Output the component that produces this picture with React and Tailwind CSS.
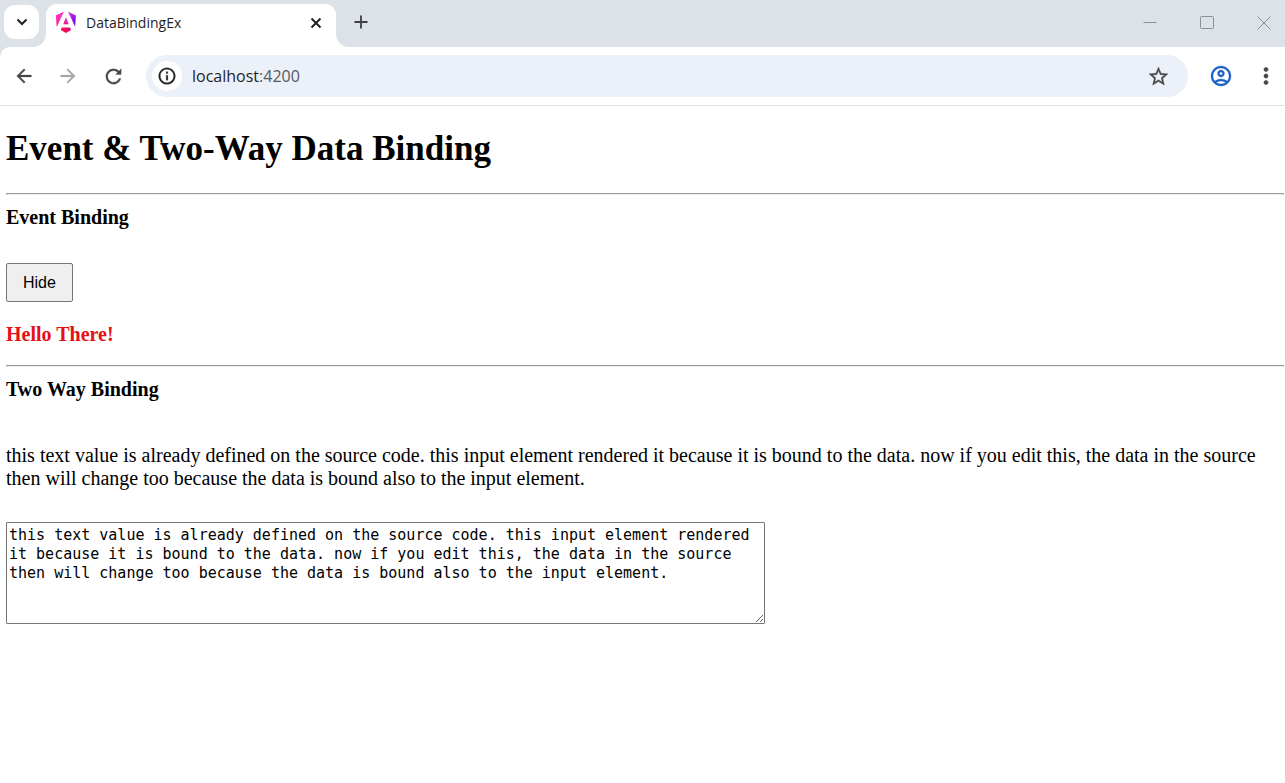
import { useState } from "react";

const INITIAL_TEXT =
  "this text value is already defined on the source code. this input element rendered it because it is bound to the data. now if you edit this, the data in the source then will change too because the data is bound also to the input element.";

function Glyph({ d, className }) {
  return (
    <svg
      viewBox="0 0 24 24"
      fill="currentColor"
      stroke="currentColor"
      strokeWidth=".3"
      aria-hidden="true"
      className={className}
    >
      <path d={d} />
    </svg>
  );
}

const ICONS = {
  back: "M20 11H7.83l5.59-5.59L12 4l-8 8 8 8 1.41-1.41L7.83 13H20v-2z",
  forward: "M12 4l-1.41 1.41L16.17 11H4v2h12.17l-5.58 5.59L12 20l8-8z",
  reload:
    "M17.65 6.35C16.2 4.9 14.21 4 12 4c-4.42 0-7.99 3.58-7.99 8s3.57 8 7.99 8c3.73 0 6.84-2.55 7.73-6h-2.08c-.82 2.33-3.04 4-5.65 4-3.31 0-6-2.69-6-6s2.69-6 6-6c1.66 0 3.14.69 4.22 1.78L14.2 9.8H20V4l-2.35 2.35z",
  info: "M11 7h2v2h-2zm0 4h2v6h-2zm1-9C6.48 2 2 6.48 2 12s4.48 10 10 10 10-4.48 10-10S17.52 2 12 2zm0 18c-4.41 0-8-3.59-8-8s3.59-8 8-8 8 3.59 8 8-3.59 8-8 8z",
  star: "M22 9.24l-7.19-.62L12 2 9.19 8.63 2 9.24l5.46 4.73L5.82 21 12 17.27 18.18 21l-1.63-7.03L22 9.24zM12 15.4l-3.76 2.27 1-4.28-3.32-2.88 4.38-.38L12 6.1l1.71 4.04 4.38.38-3.32 2.88 1 4.28L12 15.4z",
  account:
    "M5.85 17.1q1.275-.975 2.85-1.537T12 15t3.3.563 2.85 1.537q.875-1.025 1.363-2.325T20 12q0-3.325-2.337-5.663T12 4 6.337 6.338 4 12q0 1.475.488 2.775T5.85 17.1M12 13q-1.475 0-2.488-1.012T8.5 9.5t1.013-2.488T12 6t2.488 1.013T15.5 9.5t-1.012 2.488T12 13m0 9q-2.075 0-3.9-.788t-3.175-2.137-2.137-3.175T2 12t.788-3.9 2.137-3.175T8.1 2.788 12 2t3.9.788 3.175 2.137T21.213 8.1 22 12t-.788 3.9-2.137 3.175-3.175 2.138T12 22m0-2q1.325 0 2.5-.387t2.15-1.113q-.975-.725-2.15-1.112T12 17t-2.5.388T7.35 18.5q.975.725 2.15 1.113T12 20m0-9q.65 0 1.075-.425T13.5 9.5t-.425-1.075T12 8t-1.075.425T10.5 9.5t.425 1.075T12 11",
  more: "M12 8c1.1 0 2-.9 2-2s-.9-2-2-2-2 .9-2 2 .9 2 2 2zm0 2c-1.1 0-2 .9-2 2s.9 2 2 2 2-.9 2-2-.9-2-2-2zm0 6c-1.1 0-2 .9-2 2s.9 2 2 2 2-.9 2-2-.9-2-2-2z",
};

function AngularLogo() {
  return (
    <svg viewBox="0 0 223 236" aria-hidden="true" className="h-[21px] w-5">
      <defs>
        <linearGradient id="ng-a" x1="49" x2="225" y1="214" y2="130" gradientUnits="userSpaceOnUse">
          <stop stopColor="#E40035" />
          <stop offset=".24" stopColor="#F60A48" />
          <stop offset=".35" stopColor="#F20755" />
          <stop offset=".49" stopColor="#DC087D" />
          <stop offset=".75" stopColor="#9717E7" />
          <stop offset="1" stopColor="#6C00F5" />
        </linearGradient>
        <linearGradient id="ng-b" x1="22" x2="133" y1="28" y2="175" gradientUnits="userSpaceOnUse">
          <stop stopColor="#FF31D9" />
          <stop offset="1" stopColor="#FF5BE1" stopOpacity="0" />
        </linearGradient>
      </defs>
      {["url(#ng-a)", "url(#ng-b)"].map((fill) => (
        <path
          key={fill}
          fill={fill}
          d="m222.077 39.192-8.019 125.923L137.387 0l84.69 39.192Zm-53.105 162.825-57.933 33.056-57.934-33.056 11.783-28.556h92.301l11.783 28.556ZM111.039 62.675l30.357 73.803H80.681l30.358-73.803ZM7.937 165.115 0 39.192 84.69 0 7.937 165.115Z"
        />
      ))}
    </svg>
  );
}

function TabStrip() {
  return (
    <header className="flex h-[47px] bg-[#dde1e8] pl-1">
      <button
        type="button"
        aria-label="Search tabs"
        className="mt-[5px] flex h-[34px] w-[35px] items-center justify-center rounded-[11px] bg-white text-[#1f1f1f]"
      >
        <svg viewBox="0 0 12 8" fill="none" stroke="currentColor" strokeWidth="2" className="h-2 w-3">
          <path d="M1.5 1.5 6 6l4.5-4.5" />
        </svg>
      </button>
      <div className="relative ml-[7px] mt-1 flex w-[290px] items-center rounded-t-[11px] bg-white pb-[6px] pl-[10px] pr-3">
        <svg viewBox="0 0 13 13" aria-hidden="true" className="absolute bottom-0 right-full size-[13px]">
          <path fill="#fff" d="M13 0v13H0C7 13 13 7 13 0Z" />
        </svg>
        <AngularLogo />
        <span className="ml-[10px] flex-1 text-sm text-[#1f1f1f]">DataBindingEx</span>
        <button type="button" aria-label="Close tab" className="flex size-4 items-center justify-center text-[#1f1f1f]">
          <svg viewBox="0 0 12 12" stroke="currentColor" strokeWidth="1.9" className="size-3">
            <path d="m1.5 1.5 9 9M10.5 1.5l-9 9" />
          </svg>
        </button>
        <svg viewBox="0 0 13 13" aria-hidden="true" className="absolute bottom-0 left-full size-[13px]">
          <path fill="#fff" d="M0 0v13h13C6 13 0 7 0 0Z" />
        </svg>
      </div>
      <button type="button" aria-label="New tab" className="ml-[17px] flex h-11 w-4 items-center justify-center text-[#3c3f43]">
        <svg viewBox="0 0 14 14" stroke="currentColor" strokeWidth="1.8" className="size-[14px]">
          <path d="M7 .5v13M.5 7h13" />
        </svg>
      </button>
      <div className="ml-auto flex h-[45px] items-center gap-[43px] pr-[14px] text-[#8b8f96]">
        <button type="button" aria-label="Minimize">
          <svg viewBox="0 0 14 14" fill="none" stroke="currentColor" className="size-[14px]">
            <path d="M.5 6.5h13" />
          </svg>
        </button>
        <button type="button" aria-label="Maximize">
          <svg viewBox="0 0 14 14" fill="none" stroke="currentColor" className="size-[14px]">
            <rect x=".5" y=".5" width="13" height="12" rx="1" />
          </svg>
        </button>
        <button type="button" aria-label="Close window">
          <svg viewBox="0 0 14 14" fill="none" stroke="currentColor" className="size-[14px]">
            <path d="m.5.5 13 13m0-13-13 13" />
          </svg>
        </button>
      </div>
    </header>
  );
}

function Toolbar() {
  return (
    <div className="bg-[#dde1e8]">
      <nav
        aria-label="Browser"
        className="flex h-[59px] items-center rounded-tl-[10px] border-b border-[#dfe1e4] bg-white pl-[13px] pr-[6px] text-[#474747]"
      >
        <button type="button" aria-label="Back">
          <Glyph d={ICONS.back} className="size-[22px]" />
        </button>
        <button type="button" aria-label="Forward" className="ml-[22px] text-[#a8a8a8]">
          <Glyph d={ICONS.forward} className="size-[22px]" />
        </button>
        <button type="button" aria-label="Reload" className="ml-[23px]">
          <Glyph d={ICONS.reload} className="size-[23px]" />
        </button>
        <div className="ml-[21px] flex h-[42px] flex-1 items-center rounded-full bg-[#ecf0f9] pl-[6px] pr-[18px]">
          <button
            type="button"
            aria-label="View site information"
            className="flex size-[30px] items-center justify-center rounded-full bg-white text-[#1f1f1f]"
          >
            <Glyph d={ICONS.info} className="size-5" />
          </button>
          <a href="http://localhost:4200" className="ml-[10px] flex-1 text-base text-[#1f1f1f]">
            localhost<span className="text-[#55585c]">:4200</span>
          </a>
          <button type="button" aria-label="Bookmark this tab">
            <Glyph d={ICONS.star} className="size-[23px]" />
          </button>
        </div>
        <button type="button" aria-label="Profile" className="ml-[21px] text-[#1a5fc4]">
          <Glyph d={ICONS.account} className="size-6" />
        </button>
        <button type="button" aria-label="Menu" className="ml-5">
          <Glyph d={ICONS.more} className="size-[26px]" />
        </button>
      </nav>
    </div>
  );
}

function Rule() {
  return <hr className="h-[2px] border border-[#9a9a9a] border-b-[#eeeeee]" />;
}

export default function App() {
  const [visible, setVisible] = useState(true);
  const [text, setText] = useState(INITIAL_TEXT);

  return (
    <div className="min-h-screen bg-white font-['Open_Sans','Noto_Sans',sans-serif]">
      <TabStrip />
      <Toolbar />
      <main className="pl-[6px] pr-px pt-[22px] font-['Liberation_Serif',serif] text-black">
        <h1 className="mb-6 text-[35px] font-bold leading-[41px]">Event &amp; Two-Way Data Binding</h1>
        <Rule />
        <h3 className="mb-[35px] mt-[11px] text-[20px] font-bold leading-[22px]">Event Binding</h3>
        <button
          type="button"
          onClick={() => setVisible(!visible)}
          className="block h-[39px] rounded-[2px] border border-[#767676] bg-[#efefef] px-4 font-['Liberation_Sans',sans-serif] text-base"
        >
          {visible ? "Hide" : "Show"}
        </button>
        {visible && (
          <h3 className="mb-5 mt-[21px] text-[20px] font-bold leading-[22px] text-[#e60f14]">Hello There!</h3>
        )}
        <Rule />
        <h3 className="mb-11 mt-[11px] text-[20px] font-bold leading-[22px]">
          <label htmlFor="bound-text">Two Way Binding</label>
        </h3>
        <p className="mb-8 text-[20px] leading-[23px]">{text}</p>
        <textarea
          id="bound-text"
          value={text}
          spellCheck={false}
          onChange={(e) => setText(e.target.value)}
          className="block h-[102px] w-[759px] max-w-full resize rounded-[1px] border border-[#767676] px-[2px] py-[3px] font-['DejaVu_Sans_Mono',monospace] text-[15px] leading-[19px]"
        />
      </main>
    </div>
  );
}
